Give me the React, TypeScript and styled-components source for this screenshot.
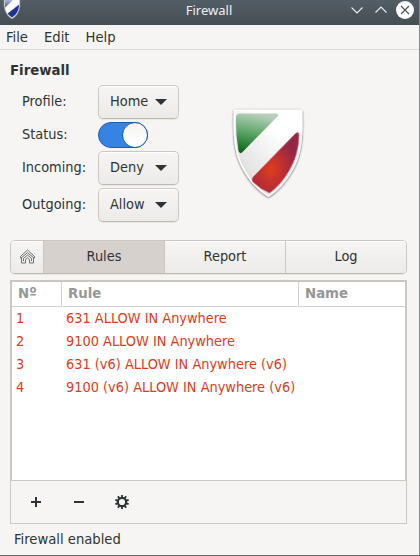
import React from "react";
import styled, { createGlobalStyle } from "styled-components";

const Global = createGlobalStyle`
  * { box-sizing: border-box; }
  html, body { margin: 0; padding: 0; }
  body { overflow: hidden; background: #85898c; }
`;

const Window = styled.div`
  width: 420px;
  height: 556px;
  display: flex;
  flex-direction: column;
  background: #f6f5f3;
  border-right: 1px solid #85898c;
  border-bottom: 1px solid #6a6866;
  font-family: "DejaVu Sans Condensed", "DejaVu Sans", sans-serif;
  font-stretch: condensed;
  font-size: 14.4px;
  line-height: 18px;
  color: #2e3436;
  white-space: nowrap;
`;

const TitleBar = styled.header`
  height: 25px;
  flex: none;
  display: grid;
  grid-template-columns: 85px 1fr 85px;
  align-items: center;
  background: linear-gradient(#535e66, #464d54);
  color: #eff0f1;
`;

const TitleIcon = styled.div`
  height: 25px;
  padding-left: 3px;
`;

const Title = styled.div`
  text-align: center;
  padding: 0 1px 5px 0;
  font-family: "Noto Sans", sans-serif;
  font-stretch: normal;
  font-size: 13px;
`;

const WindowButtons = styled.div`
  display: flex;
  height: 25px;
  svg { display: block; }
`;

const MenuBar = styled.nav`
  height: 25px;
  flex: none;
  display: flex;
  gap: 16px;
  padding: 3px 6px 0;
  font-size: 14.67px;
  border-bottom: 1px solid #dad9d7;
`;

const Content = styled.main`
  flex: 1;
  display: flex;
  flex-direction: column;
  padding: 11px 12px 0 10px;
`;

const Heading = styled.div`
  font-size: 14.8px;
  font-weight: 700;
  height: 24px;
`;

const Overview = styled.section`
  display: flex;
  height: 155px;
`;

const Settings = styled.div`
  display: grid;
  grid-template-columns: 76px 81px;
  grid-template-rows: 34px 26px 34px 34px;
  row-gap: 3px;
  align-content: start;
  align-items: center;
  padding-left: 12px;
`;

const Label = styled.label`
  padding-bottom: 2px;
`;

const Combo = styled.button`
  height: 34px;
  display: flex;
  align-items: center;
  justify-content: space-between;
  padding: 0 11px 2px;
  border: 1px solid #cdc7c2;
  border-bottom-color: #bfb8b1;
  border-radius: 5px;
  background: linear-gradient(#f6f5f4, #edebe9);
  box-shadow: inset 0 1px #fff, 0 1px 1px rgba(0, 0, 0, 0.06);
  color: inherit;
  font: inherit;
`;

const Arrow = styled.i`
  border: 6px solid transparent;
  border-top-color: #2e3436;
  border-bottom: 0;
  margin-top: 2px;
`;

const Switch = styled.button`
  width: 50px;
  height: 26px;
  padding: 0;
  display: flex;
  justify-content: flex-end;
  border: 1px solid #185fb4;
  border-radius: 13px;
  background: #3584e4;
`;

const Knob = styled.span`
  width: 26px;
  height: 26px;
  margin: -1px;
  border: 1px solid #185fb4;
  border-radius: 50%;
  background: linear-gradient(#f3f2f1, #fff 80%);
`;

const Emblem = styled.div`
  padding: 22px 0 0 52px;
  svg { display: block; }
`;

const Tabs = styled.div`
  height: 34px;
  display: grid;
  grid-template-columns: 33px 121px 121px 1fr;
  margin-bottom: 6px;
  border: 1px solid #cdc7c2;
  border-bottom-color: #bfb8b1;
  border-radius: 5px;
  overflow: hidden;
  box-shadow: 0 1px 1px rgba(0, 0, 0, 0.06);
`;

const Tab = styled.button<{ $active?: boolean }>`
  display: flex;
  align-items: center;
  justify-content: center;
  padding: 0 0 2px;
  border: 0;
  border-right: 1px solid #cdc7c2;
  background: ${(p) => (p.$active ? "#d6d1cd" : "linear-gradient(#f6f5f4, #edebe9)")};
  box-shadow: ${(p) => (p.$active ? "none" : "inset 0 1px #fff")};
  color: inherit;
  font: inherit;
  &:last-child { border-right: 0; }
`;

const Table = styled.div`
  height: 200px;
  border: 2px solid #cdc7c2;
  border-bottom: 0;
  background: #fff;
`;

const Columns = styled.div`
  display: grid;
  grid-template-columns: 50px 237px 1fr;
`;

const HeadRow = styled(Columns)`
  height: 25px;
  border-bottom: 1px solid #d5d0cc;
  color: #959798;
  font-size: 14.8px;
  font-weight: 700;
`;

const HeadCell = styled.div`
  padding: 2px 6px;
  border-right: 1px solid #d5d0cc;
  &:last-child { border-right: 0; }
`;

const Row = styled(Columns)`
  height: 23px;
  color: #de3b1b;
`;

const Cell = styled.div`
  padding: 2px 4px;
`;

const ToolBar = styled.div`
  height: 44px;
  display: flex;
  align-items: center;
  gap: 27px;
  padding: 0 17px;
  border: 1px solid #cdc7c2;
  svg { display: block; }
`;

const Status = styled.footer`
  padding: 6px 4px 0;
  font-size: 14.67px;
`;

const choices = [
  ["Incoming:", "Deny"],
  ["Outgoing:", "Allow"],
];

const rules = [
  "631 ALLOW IN Anywhere",
  "9100 ALLOW IN Anywhere",
  "631 (v6) ALLOW IN Anywhere (v6)",
  "9100 (v6) ALLOW IN Anywhere (v6)",
];

const Select = ({ value }: { value: string }) => (
  <Combo>
    {value}
    <Arrow />
  </Combo>
);

const SmallShield = () => (
  <svg width="18" height="20" viewBox="0 0 18 20">
    <defs>
      <clipPath id="small"><path d="M2 0H16V6Q15 14 9 17.5Q3 14 2 6Z" /></clipPath>
      <linearGradient id="lightBlue" x2="0" y2="1"><stop stopColor="#b8c3dd" /><stop offset="1" stopColor="#3c56a2" /></linearGradient>
    </defs>
    <path d="M1 -1H17V6Q16 15 9 19Q2 15 1 6Z" fill="#e4e5e8" stroke="#858b91" strokeWidth=".6" />
    <g clipPath="url(#small)">
      <path d="M1 -1H11L2 8H1Z" fill="url(#lightBlue)" />
      <path d="M11 -1H16V3L4 14L2 8Z" fill="#fff" />
      <path d="M17 4V18H7L4 14Z" fill="#1c3492" />
    </g>
  </svg>
);

const Shield = () => (
  <svg width="74" height="94" viewBox="0 0 74 94">
    <defs>
      <linearGradient id="green" x1=".35" y1="0" x2=".15" y2="1"><stop stopColor="#b5cfb8" /><stop offset=".5" stopColor="#56a364" /><stop offset="1" stopColor="#086015" /></linearGradient>
      <radialGradient id="red" cx=".4" cy=".62" r=".55"><stop stopColor="#dd3e1e" /><stop offset=".5" stopColor="#bd2f32" /><stop offset="1" stopColor="#952746" /></radialGradient>
      <linearGradient id="silver" x1="1" y1="0" x2="0" y2="1"><stop offset=".3" stopColor="#fff" /><stop offset="1" stopColor="#d3d3d3" /></linearGradient>
      <filter id="shadow" x="-20%" y="-20%" width="140%" height="140%"><feDropShadow dx="0" dy=".7" stdDeviation="1.2" floodOpacity=".7" /></filter>
    </defs>
    <path d="M3.5 3.5H70.5C71.5 35 69 50 60 64.5Q51 80 37.5 89Q23 80 14 64.5C5 50 2.5 35 3.5 3.5Z" fill="url(#silver)" stroke="#fff" strokeWidth="1.5" filter="url(#shadow)" />
    <path d="M9 6.5H45Q49 7 46 10L12 44.5Q9 48 7.5 44Q4.5 27 5 10Q5.5 6.5 9 6.5Z" fill="url(#green)" />
    <path d="M64 27Q68 23 68 29Q67.500 48 58.5 63Q50 78 38.500 86Q29 82 22 75Q20 73 22 70Z" fill="url(#red)" stroke="#ed6e6b" strokeWidth=".7" />
  </svg>
);

const HomeIcon = () => (
  <svg width="17" height="17" viewBox="0 0 17 17" fill="none" stroke="#6c7072" strokeWidth="1" strokeLinejoin="round">
    <path d="M1.5 8.5L8.5 2L15.5 8.5V10H14.5V15H10.5V11.5L8.5 10L6.5 11.5V15H2.5V10H1.5Z" />
    <path d="M2 10L8.5 4.8L15 10M4.5 13V10.3L8.5 7.2L12.5 10.3V13" />
  </svg>
);

const teeth = [0, 36, 72, 108, 144, 180, 216, 252, 288, 324];

export default function App() {
  return (
    <>
      <Global />
      <Window>
        <TitleBar>
          <TitleIcon><SmallShield /></TitleIcon>
          <Title>Firewall</Title>
          <WindowButtons>
            <svg width="85" height="25" viewBox="0 0 85 25" fill="none" stroke="#eff0f1" strokeWidth="1.1">
              <path d="M17.5 7.5L23 13L28.5 7.5M41.5 12.5L47 7L52.5 12.5" />
              <circle cx="71" cy="10" r="9" fill="#fff" stroke="none" />
              <path d="M67 6L75 14M75 6L67 14" stroke="#4a525a" />
            </svg>
          </WindowButtons>
        </TitleBar>
        <MenuBar>
          <span>File</span>
          <span>Edit</span>
          <span>Help</span>
        </MenuBar>
        <Content>
          <Heading>Firewall</Heading>
          <Overview>
            <Settings>
              <Label>Profile:</Label>
              <Select value="Home" />
              <Label>Status:</Label>
              <Switch role="switch" aria-checked="true"><Knob /></Switch>
              {choices.map(([label, value]) => (
                <React.Fragment key={label}>
                  <Label>{label}</Label>
                  <Select value={value} />
                </React.Fragment>
              ))}
            </Settings>
            <Emblem><Shield /></Emblem>
          </Overview>
          <Tabs>
            <Tab aria-label="Home"><HomeIcon /></Tab>
            <Tab $active>Rules</Tab>
            <Tab>Report</Tab>
            <Tab>Log</Tab>
          </Tabs>
          <Table>
            <HeadRow>
              <HeadCell>Nº</HeadCell>
              <HeadCell>Rule</HeadCell>
              <HeadCell>Name</HeadCell>
            </HeadRow>
            {rules.map((rule, i) => (
              <Row key={rule}>
                <Cell>{i + 1}</Cell>
                <Cell>{rule}</Cell>
              </Row>
            ))}
          </Table>
          <ToolBar>
            <svg width="16" height="16" viewBox="0 0 16 16"><path d="M7 3h2v4h4v2H9v4H7V9H3V7h4z" fill="#2e3436" /></svg>
            <svg width="16" height="16" viewBox="0 0 16 16"><path d="M3 7h10v2H3z" fill="#2e3436" /></svg>
            <svg width="16" height="16" viewBox="0 0 16 16" fill="none" stroke="#2e3436">
              <circle cx="8" cy="8" r="4.2" strokeWidth="2.200" />
              {teeth.map((a) => <path key={a} d="M8 1V3.5" strokeWidth="1.8" transform={`rotate(${a} 8 8)`} />)}
            </svg>
          </ToolBar>
          <Status>Firewall enabled</Status>
        </Content>
      </Window>
    </>
  );
}
